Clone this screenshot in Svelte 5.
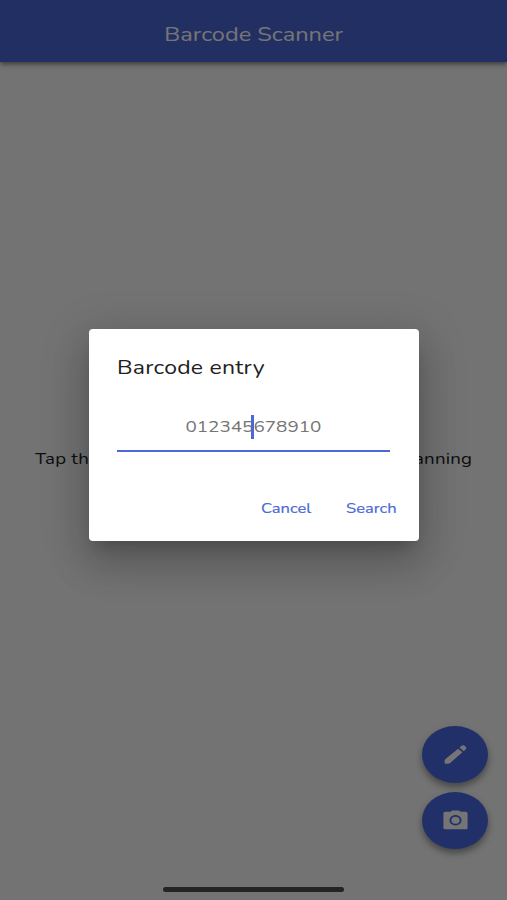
<script>
  let title = "Barcode Scanner";
  let hint = "Tap the camera or pencil buttons to begin scanning";
  let placeholder = "012345678910";
</script>

<div class="screen">
  <header><h1>{title}</h1></header>

  <main>
    <p class="hint">{hint}</p>
  </main>

  <div class="fabs">
    <button class="fab" aria-label="Enter barcode">
      <svg viewBox="0 0 24 24" preserveAspectRatio="none">
        <path d="M14.2 6.4l3.5 3.5L7.6 20.2c-.5.5-1 .7-1.6.7H3.8c-.5 0-.8-.3-.8-.8v-2.2c0-.6.3-1.1.7-1.5L14.2 6.4zM15.3 5.3l1.5-1.5c.9-.9 2-.9 2.8-.1l.8.8c.8.8.7 1.9-.1 2.8l-1.5 1.5-3.5-3.5z" />
      </svg>
    </button>
    <button class="fab" aria-label="Scan with camera">
      <svg viewBox="0 0 24 24" preserveAspectRatio="none">
        <path fill-rule="evenodd" d="M9 2.3L8 3.5H3.6C2.7 3.5 2 4.2 2 5.1v13.8c0 .9.7 1.6 1.6 1.6h16.8c.9 0 1.6-.7 1.6-1.6V5.1c0-.9-.7-1.6-1.6-1.6H16l-1-1.2H9zm3 14.5c-2.76 0-5-2.24-5-5s2.24-5 5-5 5 2.24 5 5-2.24 5-5 5z" />
        <circle cx="12" cy="11.8" r="3.4" />
      </svg>
    </button>
  </div>

  <div class="home"></div>

  <div class="overlay">
    <div class="dialog">
      <h2><span>Barcode entry</span></h2>
      <div class="field">
        <span class="digits">{placeholder}</span>
        <i class="caret"></i>
      </div>
      <div class="actions">
        <button><span>Cancel</span></button>
        <button><span>Search</span></button>
      </div>
    </div>
  </div>
</div>

<style>
  :global(body) {
    margin: 0;
    background: #737373;
  }

  .screen {
    position: relative;
    display: flex;
    flex-direction: column;
    height: 900px;
    overflow: hidden;
    background: #fafafa;
    color: #212121;
    font-family: "Nunito", "Lato", sans-serif;
  }

  h1,
  h2,
  p {
    margin: 0;
    font-weight: 400;
    white-space: nowrap;
  }

  button {
    padding: 0;
    border: 0;
    background: none;
    font: inherit;
  }

  header {
    display: flex;
    flex: none;
    align-items: center;
    justify-content: center;
    box-sizing: border-box;
    height: 62px;
    padding-top: 7px;
    background: #4b68d8;
    box-shadow: 0 2px 5px rgba(0, 0, 0, 0.5);
    color: #fff;
  }

  h1 {
    font-size: 20px;
    line-height: 28px;
    transform: scaleX(1.18);
  }

  main {
    display: flex;
    flex: 1;
    justify-content: center;
    padding-top: 385px;
  }

  .hint {
    font-size: 16px;
    line-height: 24px;
    letter-spacing: 0.2px;
    transform: scaleX(1.165);
  }

  .fabs {
    position: absolute;
    right: 19px;
    bottom: 51px;
    display: flex;
    flex-direction: column;
    gap: 9px;
  }

  .fab {
    display: flex;
    align-items: center;
    justify-content: center;
    width: 66px;
    height: 57px;
    border-radius: 50%;
    background: #4a69e4;
    box-shadow: 0 4px 7px rgba(0, 0, 0, 0.4);
  }

  .fab svg {
    width: 29px;
    height: 25px;
    fill: #fff;
  }

  .home {
    position: absolute;
    bottom: 8px;
    left: 163px;
    width: 181px;
    height: 5px;
    border-radius: 3px;
    background: #505050;
  }

  .overlay {
    position: absolute;
    inset: 0;
    display: flex;
    justify-content: center;
    align-items: flex-start;
    padding-top: 329px;
    background: rgba(0, 0, 0, 0.54);
  }

  .dialog {
    box-sizing: border-box;
    width: 330px;
    height: 212px;
    padding: 25px 22px 0 28px;
    border-radius: 4px;
    background: #fff;
    box-shadow:
      0 11px 15px -7px rgba(0, 0, 0, 0.2),
      0 24px 38px 3px rgba(0, 0, 0, 0.14),
      0 9px 46px 8px rgba(0, 0, 0, 0.12);
  }

  h2 {
    padding-left: 0.6px;
    font-size: 20px;
    line-height: 28px;
    letter-spacing: 0.2px;
  }

  h2 span {
    display: inline-block;
    transform: scaleX(1.15);
    transform-origin: left;
  }

  .field {
    position: relative;
    display: flex;
    justify-content: center;
    box-sizing: border-box;
    width: 273px;
    height: 51px;
    margin-top: 19px;
    padding: 14px 0 0 1px;
    border-bottom: 2px solid #4b68d8;
    color: #757575;
    font-size: 16.5px;
    line-height: 24px;
  }

  .digits {
    transform: scaleX(1.145);
  }

  .caret {
    position: absolute;
    top: 14px;
    left: 134px;
    width: 3px;
    height: 24px;
    background: #4b68d8;
  }

  .actions {
    display: flex;
    justify-content: flex-end;
    gap: 34px;
    margin-top: 45px;
    color: #4b68d8;
    font-size: 14px;
    line-height: 24px;
  }

  .actions button {
    width: 51px;
    color: inherit;
    text-align: left;
  }

  .actions span {
    display: inline-block;
    -webkit-text-stroke: 0.2px currentColor;
    transform: scaleX(1.18);
    transform-origin: left;
  }
</style>
